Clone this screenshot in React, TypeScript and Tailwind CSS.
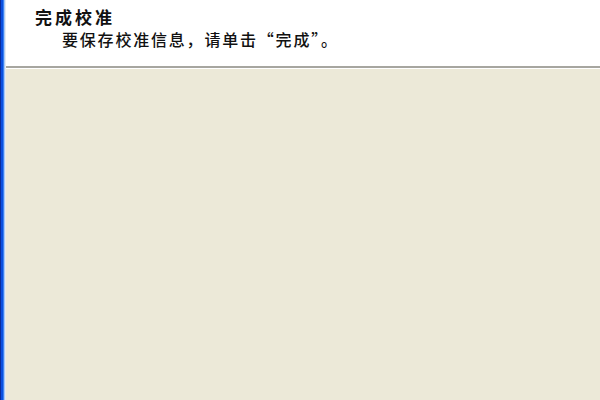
export default function App() {
  return (
    <div className="flex h-[400px] w-[600px] overflow-hidden bg-[#ece9d8] font-['Noto_Sans_CJK_SC','Noto_Sans',sans-serif]">
      {/* window frame edge */}
      <div className="flex h-full shrink-0">
        <div className="w-px bg-[#0a2a9c]" />
        <div className="w-[2px] bg-[#0a4fe0]" />
        <div className="w-px bg-[#3b82f0]" />
        <div className="w-px bg-[#a9c8f5]" />
        <div className="w-px bg-[#e4eaf4]" />
      </div>
      <div className="flex flex-1 flex-col">
        <div className="h-[66px] bg-white pl-[29px] pt-[6px]">
          <h1 className="text-[17px] font-bold leading-[22px] tracking-[3px] text-[#111]">
            完成校准
          </h1>
          <p className="pl-[27px] text-[16px] font-medium leading-[22px] tracking-[1.8px] text-[#111]">
            要保存校准信息，请单击“完成”。
          </p>
        </div>
        <div className="h-[2px] bg-[#a7a6a0]" />
        <div className="h-px bg-white" />
        <div className="flex-1 bg-[#ece9d8]" />
      </div>
    </div>
  );
}
